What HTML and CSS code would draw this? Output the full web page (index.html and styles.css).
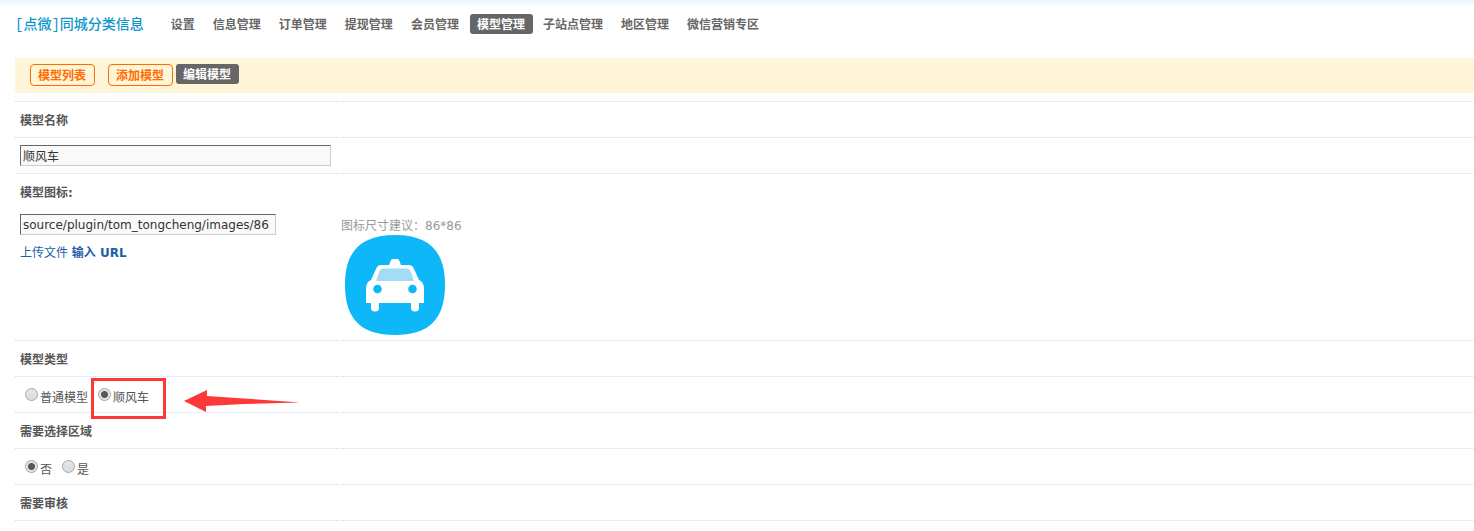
FILE: index.html
```html
<!DOCTYPE html>
<html lang="zh-CN">
<head>
<meta charset="utf-8">
<title>模型管理</title>
<link rel="stylesheet" href="styles.css">
</head>
<body>
<header class="topbar">
  <h1 class="title">[点微]同城分类信息</h1>
  <nav class="nav">
    <a href="#">设置</a>
    <a href="#">信息管理</a>
    <a href="#">订单管理</a>
    <a href="#">提现管理</a>
    <a href="#">会员管理</a>
    <a href="#" class="current">模型管理</a>
    <a href="#">子站点管理</a>
    <a href="#">地区管理</a>
    <a href="#">微信营销专区</a>
  </nav>
</header>
<main class="content">
  <div class="tabs">
    <a href="#" class="tab">模型列表</a>
    <a href="#" class="tab">添加模型</a>
    <a href="#" class="tab-current">编辑模型</a>
  </div>
  <form>
    <table class="form-table">
      <tr><th><label for="name">模型名称</label></th><td></td></tr>
      <tr><td><input class="text wide" id="name" type="text" value="顺风车"></td><td></td></tr>
      <tr class="icon-head"><th><label for="icon">模型图标:</label></th><td></td></tr>
      <tr class="icon-row">
        <td>
          <input class="text" id="icon" type="text" value="source/plugin/tom_tongcheng/images/86">
          <div class="links"><a href="#">上传文件</a> <a href="#" class="strong">输入 URL</a></div>
        </td>
        <td>
          <div class="hint">图标尺寸建议：86*86</div>
          <svg class="car" viewBox="0 0 100 100" role="img" aria-label="顺风车">
            <path fill="#0db7f8" d="M50 0C84 0 100 16 100 50S84 100 50 100 0 84 0 50 16 0 50 0Z"/>
            <path fill="#fff" d="M44 30L46 25Q46.500 24 48 24H52Q53.500 24 54 25L56 30H64Q67.500 30 69 34L74 45Q79 47 79 54V68H74V73Q74 76.500 70 76.500T66 73V68H34V73Q34 76.500 30 76.500T26 73V68H21V54Q21 47 26 45L31 34Q32.500 30 36 30Z"/>
            <path fill="#a3dcf5" d="M38 33.500H62Q64.500 33.500 65.500 36L69 46H31L34.500 36Q35.500 33.500 38 33.500Z"/>
            <circle cx="32.500" cy="54" r="4.300" fill="#0db7f8"/>
            <circle cx="67.500" cy="54" r="4.300" fill="#0db7f8"/>
          </svg>
        </td>
      </tr>
      <tr><th>模型类型</th><td></td></tr>
      <tr>
        <td>
          <div class="choices">
            <label><input type="radio" name="type">普通模型</label>
            <label class="marked"><input type="radio" name="type" checked>顺风车
              <svg class="arrow" viewBox="0 0 116 22" aria-hidden="true"><path fill="#fc3838" d="M0 11L23 0V6L60 8.500L116 12.500L60 14L22 16V22Z"/></svg>
            </label>
          </div>
        </td>
        <td></td>
      </tr>
      <tr><th>需要选择区域</th><td></td></tr>
      <tr>
        <td>
          <div class="choices">
            <label><input type="radio" name="area" checked>否</label>
            <label><input type="radio" name="area">是</label>
          </div>
        </td>
        <td></td>
      </tr>
      <tr class="last"><th>需要审核</th><td></td></tr>
    </table>
  </form>
</main>
</body>
</html>
```
FILE: styles.css
```css
*, *::after { box-sizing: border-box; }
body {
  margin: 0;
  color: #555;
  background: linear-gradient(#ebf4fc, #fff 6px) no-repeat #fff;
  font: 12px/18px "DejaVu Sans", "Noto Sans CJK SC", sans-serif;
}
a { color: #1e5fa8; text-decoration: none; }

.topbar {
  display: flex;
  align-items: center;
  gap: 20px;
  height: 48px;
  padding-left: 15px;
}
.title {
  margin: 0;
  padding-top: 2px;
  color: #0b96cc;
  font: 500 14px/18px "Liberation Mono", "Noto Sans CJK SC", sans-serif;
  white-space: nowrap;
}
.nav { display: flex; gap: 3px; white-space: nowrap; }
.nav a {
  padding: 2px 8px 0 7px;
  border-radius: 3px;
  color: #666;
  font-weight: bold;
}
.nav .current { color: #fff; background: #666; }

.content { padding: 10px 0 10px 15px; }
.tabs {
  display: flex;
  align-items: flex-start;
  height: 35px;
  padding: 6px 15px;
  background: #fff5d8;
  font-weight: bold;
}
.tab {
  margin-right: 13px;
  padding: 2px 8px 0 7px;
  border: 1px solid #ff6c00;
  border-radius: 4px;
  color: #ff6c00;
}
.tab:nth-child(2) { margin-right: 3px; }
.tab-current {
  padding: 2px 8px 0 7px;
  border-radius: 3px;
  color: #fff;
  background: #666;
}

.form-table {
  width: 100%;
  margin-top: 8px;
  border-collapse: separate;
  border-spacing: 0;
  table-layout: fixed;
}
.form-table th, .form-table td {
  height: 36px;
  padding: 0 5px;
  border-top: 1px dotted #c4e0f6;
  text-align: left;
}
.form-table th { padding-top: 2px; }
.form-table th:first-child { width: 321px; }
.form-table .icon-head th { border-top: 1px solid #deeffb; }
.form-table .icon-row td {
  height: 131px;
  padding-top: 5px;
  border-top: 0;
  vertical-align: top;
}
.form-table .last th, .form-table .last td { height: 37px; border-bottom: 1px dotted #c4e0f6; }

.text {
  display: block;
  width: 256px;
  height: 21px;
  padding: 0 2px;
  border: 1px solid;
  border-color: #666 #ccc #ccc #666;
  color: #333;
  background: #f9f9f9;
  font: inherit;
}
.wide { width: 100%; }
.links { margin-top: 9px; }
.strong { font-weight: bold; }
.hint { margin-top: 3px; color: #999; }
.car { display: block; width: 100px; height: 100px; margin-left: 4px; }

.choices { display: flex; gap: 10px; padding-left: 5px; }
.choices label { display: flex; gap: 2px; padding-top: 8px; line-height: 21px; }
.choices input {
  appearance: none;
  width: 13px;
  height: 13px;
  margin: 0;
  border: 1px solid #a5a5a5;
  border-radius: 50%;
  background: linear-gradient(#e6e6e6, #dcdcdc);
}
.choices input:checked {
  background: radial-gradient(circle, #555 0 3px, #e4e4e4 4px);
}
.marked { position: relative; }
.marked::after {
  content: "";
  position: absolute;
  top: -2px;
  left: -7px;
  width: 75px;
  height: 41px;
  border: 3px solid #fc3838;
}
.arrow { position: absolute; top: 10px; left: 86px; width: 116px; height: 22px; }
```
